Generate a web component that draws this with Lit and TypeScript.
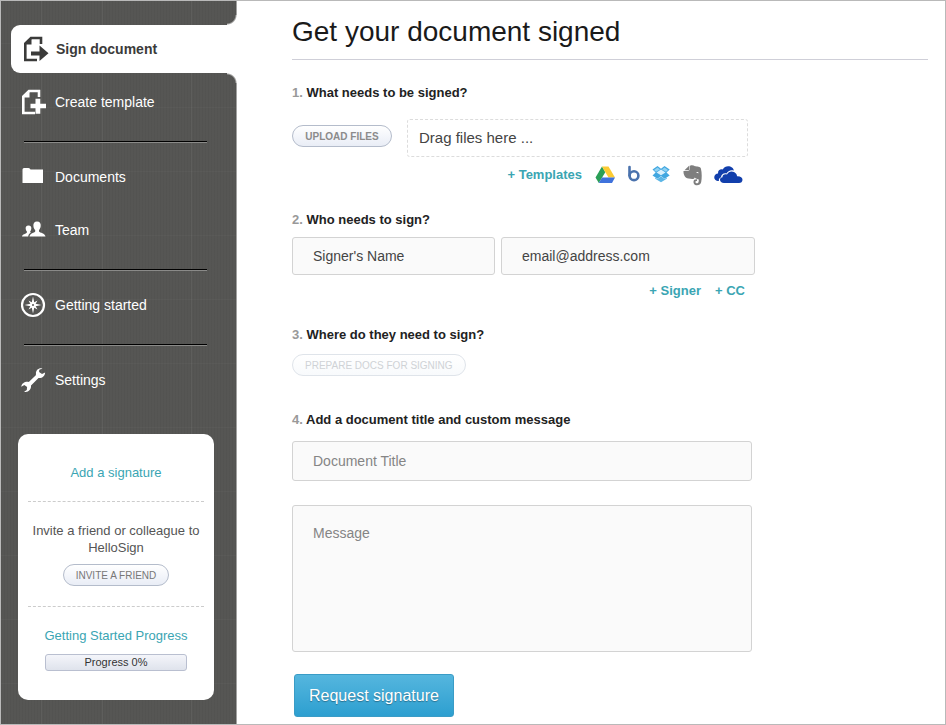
import { LitElement, html, css, svg, nothing } from "lit";
import { customElement, state } from "lit/decorators.js";
import { classMap } from "lit/directives/class-map.js";

interface NavItem {
  id: string;
  label: string;
  divided?: boolean;
}

const NAV: NavItem[] = [
  { id: "sign", label: "Sign document" },
  { id: "template", label: "Create template" },
  { id: "documents", label: "Documents", divided: true },
  { id: "team", label: "Team" },
  { id: "start", label: "Getting started", divided: true },
  { id: "settings", label: "Settings", divided: true },
];

const page = svg`<path d="M18 8V2H8L2.300 7.500V24H14" fill="none" stroke="currentColor" stroke-width="2.600"/>
  <path d="M1 8.500 8.500 1V8.500Z" fill="currentColor"/>`;

const NAV_ICONS: Record<string, unknown> = {
  sign: svg`${page}<path d="M8 15.500H16.500V9.500L25.500 17.300 16.500 25V19.500H8Z" fill="currentColor"/>`,
  template: svg`${page}<path d="M14.500 9.800H19.300V14.800H25V19.300H19.300V24.800H14.500V19.300H9.500V14.800H14.500Z" fill="currentColor"/>`,
  documents: svg`<path d="M1.500 19V5.500Q1.500 4 3 4H7.500Q9 4 9.500 5.500H22V19Z" fill="currentColor"/>`,
  team: svg`<path d="M16 4.500C18.800 4.500 20 6.500 19.700 9 19.500 11.200 18.600 12.400 18 13V14.500C19 16 24 16.200 24.500 19.500H8.500C9 16.200 13.400 16 14.200 14.500V13C13.400 12.400 12.600 11.200 12.400 9 12.100 6.500 13.400 4.500 16 4.500Z" fill="currentColor"/>
    <path d="M7.500 8.500C9.800 8.500 10.600 10 10.300 12 10.100 13.200 9.600 14 9.200 14.500V15.300L10 15.600C8.500 16.600 7.500 17.500 7.200 19.500H1C1.300 16.800 5 17 5.900 15.400V14.500C5.300 14 4.900 13.200 4.700 12 4.400 10 5.300 8.500 7.500 8.500Z" fill="currentColor"/>`,
  start: svg`<circle cx="12" cy="13" r="11" fill="none" stroke="currentColor" stroke-width="2.200"/>
    <path d="M12 4.500 13.500 11.500 20.500 13 13.500 14.500 12 21.500 10.500 14.500 3.500 13 10.500 11.500Z" fill="currentColor"/>
    <path d="M7.500 8.500 12 11 16.500 8.500 14 13 16.500 17.500 12 15 7.500 17.500 10 13Z" fill="currentColor"/>
    <circle cx="12" cy="13" r="1" fill="#555553"/>`,
  settings: svg`<path d="M21.500 1.500C18 .5 14.500 3 15 7L14.800 8.300 7.800 15C4 14.300 .5 16.500 .3 19.800L3.300 18.100 6.100 20 5.800 23 3.100 24.700C7 25.800 10.500 22.700 10 18.500L17.500 11C21 11.500 24 9 24.100 5.500L21 7.100 18.100 5.100 18.300 2.700Z" fill="currentColor"/>`,
};

interface Provider {
  name: string;
  width: number;
  art: unknown;
}

const PROVIDERS: Provider[] = [
  {
    name: "Google Drive",
    width: 21,
    art: svg`<path d="M8 2.500 11.300 8.200 4.800 19 1.500 13.500Z" fill="#2a9f57"/>
      <path d="M8 2.500H14.500L21 13.500H14.500Z" fill="#fccb33"/>
      <path d="M8 13.500H21L18 19H4.800Z" fill="#3f72dc"/>`,
  },
  {
    name: "Box",
    width: 13,
    art: svg`<path d="M2.500 3V11.500" fill="none" stroke="#4a72ad" stroke-width="2.600" stroke-linecap="round"/>
      <circle cx="7" cy="11.700" r="4.400" fill="none" stroke="#4a72ad" stroke-width="2.600"/>`,
  },
  {
    name: "Dropbox",
    width: 18,
    art: svg`<path d="M5.500 2 9 4.700 12.500 2 17.700 5.500 14.500 8.600 17.700 11.500 12.500 14.800 9 12 5.500 14.800 .5 11.500 3.600 8.600 .5 5.500Z" fill="#42a7e0"/>
      <path d="M9 5.600 13.500 8.600 9 11.300 4.500 8.600Z" fill="#d9f0fc"/>
      <path d="M3.200 13.500V14.700L9 18.300 14.800 14.700V13.500L12.500 15 9 12.300 5.500 15Z" fill="#5cb6e6"/>
      <path d="M5.500 3.600 8 5.400 4 7.800 2 5.900ZM12.500 3.600 10 5.400 14 7.800 16 5.900Z" fill="#8fd2f3"/>`,
  },
  {
    name: "Evernote",
    width: 20,
    art: svg`<path d="M7.300 1.500V5.200Q7.300 6.300 6.200 6.300H2.500Z" fill="#7e7e7e"/>
      <path d="M7.800 2.300C8.100 1 11.300.8 13 2.300 15.100 2.600 18.200 2.600 18.900 4.500 20 9 19.900 14.500 19.200 18 18.700 20.300 17 21.300 15 21.300 12.100 21.300 11.500 19.500 11.500 17.800 11.500 15.700 12.900 15 15 15.200V17C14 17 13.400 17.200 13.400 18 13.400 19 14.200 19.200 15.200 19.200 16.700 19.200 16.800 17.500 16.800 15.500 15.500 14.900 13.500 15 12.700 13.500 12.200 15.500 10 15.200 6.500 14.600 3 14 1.300 10.500 1.500 6.900H6Q7.800 6.900 7.800 5.100Z" fill="#7e7e7e"/>
      <path d="M14.200 8.800C14.500 7.500 16.500 7.600 16.700 9.200Z" fill="#fff"/>`,
  },
  {
    name: "OneDrive",
    width: 29,
    art: svg`<path d="M5 17C1.500 17 0 15 .3 12.700 .6 10.700 2 9.500 4 9.400 3.800 6.300 6.500 4.800 8.800 5.500 10.300 2.500 13.500 1.700 16.200 2.600 18.300 3.300 19.500 4.800 19.900 6.500 16.500 5.500 13.800 7 12.500 9.400 9.300 8.800 7 10.800 7 13.200 5 14 4.500 15.500 5 17Z" fill="#123fac"/>
      <path d="M10 19C7.500 19 6 17.500 6 15.800 6 14.200 7.200 13.300 8.500 13.200 8.300 10.800 10.700 9.600 13 10.500 14.300 7.500 17.500 6.800 20 8 22.200 9 23 10.800 23 12.200 26.300 12 28.500 13.300 28.500 15.700 28.500 17.700 27 19 25 19Z" fill="#123fac"/>`,
  },
];

@customElement("app-root")
export class AppRoot extends LitElement {
  @state() private current = "sign";
  @state() private progress = 0;

  static styles = css`
    :host {
      display: block;
      font: 14px/20px "Liberation Sans", Arial, sans-serif;
      color: #222;
    }
    * {
      box-sizing: border-box;
    }
    button,
    input,
    textarea {
      font: inherit;
      margin: 0;
    }
    a {
      color: #3aa5b3;
      text-decoration: none;
    }
    svg {
      display: block;
      flex: none;
    }
    .frame {
      display: flex;
      min-height: 100vh;
      border: 1px solid #b9b9b9;
      background: #fff;
    }

    /* Sidebar */
    .sidebar {
      flex: none;
      width: 236px;
      padding-top: 24px;
      padding-bottom: 24px;
      background:
        linear-gradient(#a2a2a1, #a2a2a1) right / 1px 100% no-repeat,
        repeating-linear-gradient(90deg, transparent 0 40px, #ffffff0c 40px 41px, transparent 41px 101px, #ffffff0c 101px 102px, transparent 102px 150px),
        repeating-linear-gradient(transparent 0 42px, #ffffff06 42px 43px, transparent 43px 64px),
        repeating-linear-gradient(90deg, #00000008 0 1px, transparent 1px 3px),
        #565654;
    }
    .nav-list {
      list-style: none;
      margin: 0;
      padding: 0;
    }
    .divider {
      height: 2px;
      margin: 13px 30px 7px 23px;
      border: 0;
      border-top: 1px solid #000;
      background: #8a8a88;
    }
    .nav-link {
      display: flex;
      align-items: center;
      gap: 8px;
      height: 53px;
      padding-left: 20px;
      color: #fff;
    }
    .nav-link.active {
      position: relative;
      gap: 7px;
      height: 48px;
      margin: 0 0 2px 10px;
      padding-left: 12px;
      border-radius: 9px 0 0 9px;
      background: #fff;
      color: #3b3b3a;
      font-weight: bold;
    }
    .nav-link.active::before,
    .nav-link.active::after {
      content: "";
      position: absolute;
      right: 0;
      width: 10px;
      height: 10px;
    }
    .nav-link.active::before {
      bottom: 100%;
      background: radial-gradient(circle at 0 0, transparent 8px, #a2a2a1 9px, #fff 10px);
    }
    .nav-link.active::after {
      top: 100%;
      background: radial-gradient(circle at 0 100%, transparent 8px, #a2a2a1 9px, #fff 10px);
    }
    .card {
      margin: 28px 23px 0 17px;
      padding: 0 10px;
      border-radius: 10px;
      background: #fff;
      color: #555;
      font-size: 13px;
      line-height: 17px;
      text-align: center;
    }
    .card-part {
      display: flex;
      flex-direction: column;
      align-items: center;
      gap: 8px;
      padding: 20px 0;
      border-bottom: 1px dashed #ccc;
    }
    .card-part.first {
      padding: 30px 0 20px;
    }
    .card-part.last {
      gap: 10px;
      padding-bottom: 29px;
      border-bottom: 0;
    }
    .card-text {
      margin: 0;
    }
    .meter {
      width: 142px;
      height: 17px;
      border: 1px solid #b9bfd0;
      border-radius: 3px;
      background: linear-gradient(#f4f5fa, #dfe3ec);
      color: #333;
      font-size: 11px;
      line-height: 15px;
    }

    /* Form */
    .main {
      flex: 1;
      min-width: 0;
      padding: 12px 17px 7px 55px;
    }
    .title {
      margin: 0;
      padding-bottom: 8px;
      border-bottom: 1px solid #cfcfd8;
      font-size: 28px;
      font-weight: normal;
      line-height: 38px;
      color: #1a1a1a;
    }
    .form {
      max-width: 463px;
    }
    .step {
      margin: 0;
      font-size: 13px;
      line-height: 20px;
      color: #222;
    }
    .num {
      color: #999;
    }
    .files {
      margin-top: 23px;
    }
    .signers {
      margin-top: 17px;
    }
    .where {
      margin-top: 24px;
    }
    .details {
      margin-top: 34px;
    }
    .pill {
      flex: none;
      height: 22px;
      padding: 2px 12px 0;
      border: 1px solid #b4bccb;
      border-radius: 11px;
      background: linear-gradient(#fff, #e9edf6);
      color: #8b8b8b;
      font-size: 10px;
      font-weight: bold;
      line-height: 18px;
      text-transform: uppercase;
    }
    .pill.plain {
      font-weight: normal;
      color: #777;
    }
    .pill:disabled {
      border-color: #dfe4ea;
      background: linear-gradient(#fff, #f8fafc);
      color: #cfd2d6;
      font-weight: normal;
    }
    .upload {
      display: flex;
      align-items: center;
      gap: 15px;
      margin: 16px 7px 0 0;
    }
    .upload .pill {
      width: 100px;
      margin-bottom: 4px;
    }
    .drop {
      flex: 1;
      height: 38px;
      padding-left: 11px;
      border: 1px dashed #dcdcdc;
      border-radius: 3px;
      font-size: 15px;
      line-height: 36px;
      color: #444;
    }
    .sources {
      display: flex;
      justify-content: flex-end;
      align-items: center;
      gap: 12px;
      height: 36px;
      margin-right: 12px;
    }
    .source {
      padding: 0;
      border: 0;
      background: none;
    }
    .add {
      font-size: 13px;
      font-weight: bold;
    }
    .signer-row {
      display: grid;
      grid-template-columns: 203fr 254fr;
      gap: 6px;
      margin-top: 7px;
    }
    .field {
      display: block;
      width: 100%;
      height: 38px;
      padding: 0 20px;
      border: 1px solid #d3d3d3;
      border-radius: 3px;
      background: #fafafa;
      color: #444;
    }
    .field::placeholder {
      color: #444;
      opacity: 1;
    }
    .adders {
      display: flex;
      justify-content: flex-end;
      gap: 14px;
      margin: 6px 10px 0 0;
    }
    .prepare {
      margin-top: 9px;
    }
    .wide {
      display: grid;
      gap: 24px;
      margin: 11px 3px 0 0;
    }
    .wide .field {
      height: 40px;
    }
    .wide .message {
      height: 147px;
      padding: 17px 20px;
      resize: none;
    }
    .wide .field::placeholder {
      color: #858585;
    }
    .submit {
      height: 43px;
      margin: 22px 0 0 2px;
      padding: 0 14px;
      border: 1px solid #3a9cc6;
      border-radius: 3px;
      background: linear-gradient(#55b6de, #2d9fd0);
      color: #fff;
      font-size: 16px;
      text-shadow: 0 1px 1px #0005;
    }
  `;

  private renderNav(item: NavItem) {
    const active = item.id === this.current;
    return html`<li>
      ${item.divided ? html`<hr class="divider" />` : nothing}
      <a
        class=${classMap({ "nav-link": true, active })}
        href="#${item.id}"
        aria-current=${active ? "page" : nothing}
        @click=${() => (this.current = item.id)}
      >
        <svg width="26" height="26" viewBox="0 0 26 26" aria-hidden="true">${NAV_ICONS[item.id]}</svg>
        <span>${item.label}</span>
      </a>
    </li>`;
  }

  private step(n: number, text: string) {
    return html`<h2 class="step"><span class="num">${n}.</span> ${text}</h2>`;
  }

  render() {
    return html`
      <div class="frame">
        <aside class="sidebar">
          <nav>
            <ul class="nav-list">
              ${NAV.map((item) => this.renderNav(item))}
            </ul>
          </nav>
          <section class="card">
            <div class="card-part first"><a href="#signature">Add a signature</a></div>
            <div class="card-part">
              <p class="card-text">Invite a friend or colleague to HelloSign</p>
              <button class="pill plain" type="button">Invite a friend</button>
            </div>
            <div class="card-part last">
              <a href="#progress">Getting Started Progress</a>
              <div class="meter" role="progressbar" aria-valuenow=${this.progress} aria-valuemin="0" aria-valuemax="100">
                Progress ${this.progress}%
              </div>
            </div>
          </section>
        </aside>

        <main class="main">
          <h1 class="title">Get your document signed</h1>
          <form class="form" @submit=${(e: Event) => e.preventDefault()}>
            <section class="files">
              ${this.step(1, "What needs to be signed?")}
              <div class="upload">
                <button class="pill" type="button">Upload files</button>
                <div class="drop">Drag files here ...</div>
              </div>
              <div class="sources">
                <a class="add" href="#templates">+ Templates</a>
                ${PROVIDERS.map(
                  (p) => html`<button class="source" type="button" aria-label=${p.name}>
                    <svg width=${p.width} height="22" viewBox="0 0 ${p.width} 22">${p.art}</svg>
                  </button>`
                )}
              </div>
            </section>

            <section class="signers">
              ${this.step(2, "Who needs to sign?")}
              <div class="signer-row">
                <input class="field" type="text" aria-label="Signer's Name" placeholder="Signer's Name" />
                <input class="field" type="email" aria-label="Email address" placeholder="email@address.com" />
              </div>
              <div class="adders">
                <a class="add" href="#signer">+ Signer</a>
                <a class="add" href="#cc">+ CC</a>
              </div>
            </section>

            <section class="where">
              ${this.step(3, "Where do they need to sign?")}
              <button class="pill prepare" type="button" disabled>Prepare docs for signing</button>
            </section>

            <section class="details">
              ${this.step(4, "Add a document title and custom message")}
              <div class="wide">
                <input class="field" type="text" aria-label="Document Title" placeholder="Document Title" />
                <textarea class="field message" aria-label="Message" placeholder="Message"></textarea>
              </div>
            </section>

            <button class="submit" type="submit">Request signature</button>
          </form>
        </main>
      </div>
    `;
  }
}
